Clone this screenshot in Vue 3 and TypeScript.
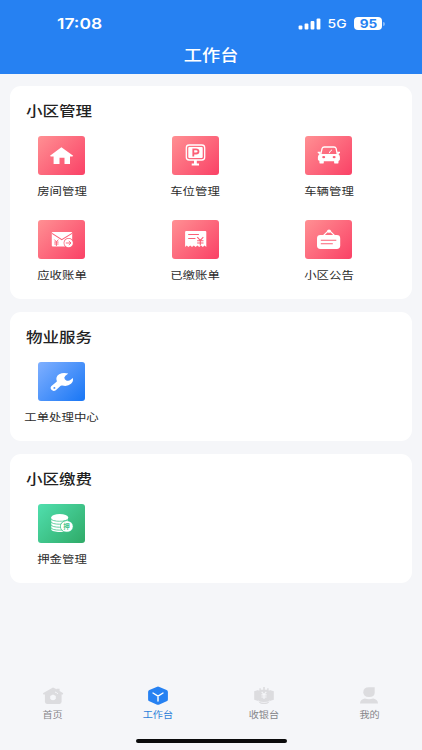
<script setup lang="ts">
type IconName = 'house' | 'parking' | 'car' | 'envelope' | 'bill' | 'notice' | 'wrench' | 'coins'
interface Entry { label: string; icon: IconName }
interface Section { title: string; tone: 'red' | 'blue' | 'green'; items: Entry[] }

const sections: Section[] = [
  {
    title: '小区管理',
    tone: 'red',
    items: [
      { label: '房间管理', icon: 'house' },
      { label: '车位管理', icon: 'parking' },
      { label: '车辆管理', icon: 'car' },
      { label: '应收账单', icon: 'envelope' },
      { label: '已缴账单', icon: 'bill' },
      { label: '小区公告', icon: 'notice' },
    ],
  },
  { title: '物业服务', tone: 'blue', items: [{ label: '工单处理中心', icon: 'wrench' }] },
  { title: '小区缴费', tone: 'green', items: [{ label: '押金管理', icon: 'coins' }] },
]

const tabs = [
  { label: '首页', icon: 'home', active: false },
  { label: '工作台', icon: 'work', active: true },
  { label: '收银台', icon: 'cash', active: false },
  { label: '我的', icon: 'me', active: false },
]
</script>

<template>
  <div class="screen">
    <header class="header">
      <div class="status">
        <span class="clock wide">17:08</span>
        <div class="status-right">
          <svg class="signal" width="23" height="12" viewBox="0 0 23 12" fill="#fff">
            <rect x="0.6" y="7.6" width="3.8" height="3.9" rx="1" />
            <rect x="6.6" y="5.4" width="3.8" height="6.1" rx="1" />
            <rect x="12.6" y="2.9" width="3.8" height="8.6" rx="1" />
            <rect x="18.6" y="0.4" width="3.8" height="11.1" rx="1" />
          </svg>
          <span class="network wide">5G</span>
          <div class="battery"><span class="wide">95</span></div>
          <i class="battery-tip"></i>
        </div>
      </div>
      <h1 class="page-title"><span class="wide">工作台</span></h1>
    </header>

    <main class="content">
      <section v-for="s in sections" :key="s.title" class="card">
        <h2 class="card-title"><span class="wide">{{ s.title }}</span></h2>
        <div class="grid">
          <div v-for="it in s.items" :key="it.label" class="entry">
            <div class="tile" :class="s.tone">
              <svg width="47" height="39" viewBox="0 0 47 39" fill="#fff">
                <path v-if="it.icon === 'house'" d="M23.4 11.2 35.2 19.8 34.4 20.6H32V28H26.5V21.8H21.5V28H15.6V20.6H12.8L12 19.8Z" />
                <template v-else-if="it.icon === 'parking'">
                  <rect x="14.3" y="9" width="18.4" height="15" rx="2.8" fill="none" stroke="#fff" stroke-width="1.3" />
                  <rect x="16.3" y="11" width="14.4" height="11" rx="1" />
                  <path d="M21.3 20.4V13.4H24Q26.5 13.4 26.5 15.4T24 17.5H21.3" class="ink" fill="none" stroke-width="1.8" />
                  <path d="M22 24h2.8v3.6H27v2h-7.3v-2H22Z" />
                </template>
                <template v-else-if="it.icon === 'car'">
                  <path d="M15.9 17.8 17.1 12.4Q17.6 11 19.2 11H29Q30.6 11 31.1 12.4L32.2 17.8" fill="none" stroke="#fff" stroke-width="1.3" />
                  <path d="M12.7 15.8h3V18h16.5v-2.2H35v1.3l-1.6.8q1.5 1.3 1.5 3.2v2.5q0 1-1.4 1.3v1.5q0 1.2-1.2 1.2h-2q-1.2 0-1.2-1.2v-1.2H18.8v1.2q0 1.2-1.2 1.2h-2q-1.2 0-1.2-1.2v-1.5q-1.5-.3-1.5-1.3v-2.5q0-1.9 1.6-3.2l-1.8-.8Z" />
                  <path d="m24.2 17.2 1.3-2.3 1.5-1" fill="none" stroke="#fff" stroke-width="1" />
                  <ellipse cx="18.7" cy="21.1" rx="1.5" ry="1.2" class="ink-fill" />
                  <ellipse cx="29.1" cy="21.1" rx="1.5" ry="1.2" class="ink-fill" />
                </template>
                <template v-else-if="it.icon === 'envelope'">
                  <rect x="13.8" y="12.1" width="20.4" height="14.5" rx="1" />
                  <path d="m14 13.4 9.8 6.2 10.2-6.2" fill="none" class="ink" stroke-width="1.1" />
                  <path d="m16.4 19.6 2 2.3 2-2.3M18.4 21.9V26M16.2 22.1h4.4M16.2 24h4.4" fill="none" class="ink" stroke-width=".9" />
                  <circle cx="30.6" cy="23" r="5" class="ink-fill" />
                  <circle cx="30.6" cy="23" r="4.3" />
                  <path d="M27.8 23h5M30.8 21l2.2 2-2.2 2" fill="none" class="ink" stroke-width=".9" />
                </template>
                <template v-else-if="it.icon === 'bill'">
                  <path d="M14.2 11H33.2q1.1 0 1.1 1V27l-1.7-1.4L30.8 27 29 25.6 27.2 27l-1.8-1.4L23.6 27l-1.8-1.4L20 27l-1.8-1.4L16.4 27l-1.7-1.4L13.1 27V12q0-1 1.1-1Z" />
                  <path d="M16.2 14.5h10.7M16.2 18.5h7.2M25.3 17.2l3 3.2 3-3.2M28.3 20.4v5M25.1 20.8h6.4M25.1 23h6.4" fill="none" class="ink" stroke-width="1.1" />
                </template>
                <template v-else-if="it.icon === 'notice'">
                  <path d="m18 16 5-5h2l5 5" fill="none" stroke="#fff" stroke-width="1.1" />
                  <ellipse cx="24" cy="11.2" rx="1.9" ry="1.6" />
                  <rect x="12" y="15" width="23.2" height="14" rx="3.4" />
                  <path d="M15.8 20.2h15.5M15.8 23.8h12" class="ink" stroke-width="1.05" />
                </template>
                <template v-else-if="it.icon === 'wrench'">
                  <path d="M30.3 11.6Q25.3 9.9 21.2 12.2 17.2 14.7 18.8 18.9 18.9 19.6 18.3 20.1L13.2 24.2Q11.7 25.9 13.4 27.8 15.4 29.8 17.8 28.2L22.7 23.8Q23.3 23.3 24.3 23.5 29.5 24.8 33 21.8 35.6 19.5 34.9 16L32.6 17.8Q30.7 19.3 28.3 18.4L26.8 17.3Q25.5 15.4 27.4 13.7Z" />
                  <ellipse cx="16.4" cy="25.9" rx="1" ry=".9" class="ink-fill" />
                </template>
                <template v-else>
                  <path d="M13.3 13.5v12c0 3.3 16.7 3.3 16.7 0v-12Z" />
                  <path d="M13 14.6c0 3.5 17 3.5 17 0M13 17.6c0 3.5 17 3.5 17 0M13 20.6c0 3.5 17 3.5 17 0M13 23.5c0 3.5 17 3.5 17 0" fill="none" class="ink" stroke-width=".8" />
                  <ellipse cx="21.7" cy="13.2" rx="8.4" ry="3.1" />
                  <ellipse cx="28.8" cy="22.4" rx="6.7" ry="6.1" class="ink-fill" />
                  <ellipse cx="28.8" cy="22.4" rx="6" ry="5.4" />
                  <text x="28.6" y="24.8" text-anchor="middle" class="coin-text ink-fill">押</text>
                </template>
              </svg>
            </div>
            <span class="entry-label wide">{{ it.label }}</span>
          </div>
        </div>
      </section>
    </main>

    <nav class="tabbar">
      <div v-for="t in tabs" :key="t.label" class="tab" :class="{ active: t.active }">
        <svg width="22" height="20" viewBox="0 0 22 20" fill="#dcdcdf">
          <template v-if="t.icon === 'home'">
            <path d="M11 1.4 14.6 3.3V2.7h3v2.2l3.3 2q.7.9-.2 1.7H19.6v7.2q0 2.1-2.1 2.1H5q-2.1 0-2.1-2.1V8.6H1.5Q.5 7.8 1.3 6.9Z" />
            <path d="M11 8.6 13.8 10v2.2q-.4 2-2.8 2t-2.8-2V10Z" fill="#f5f6f9" />
            <path d="M13 6q2 .7 3 1.8" fill="none" stroke="#f5f6f9" stroke-width="1" />
          </template>
          <template v-else-if="t.icon === 'work'">
            <path d="M9.6.9Q11 .2 12.4.9L19.6 4.1Q20.9 4.8 20.9 6V13.4Q20.9 14.7 19.6 15.3L12.4 18.5Q11 19.1 9.6 18.5L2.4 15.3Q1.1 14.7 1.1 13.4V6Q1.1 4.8 2.4 4.1Z" fill="#2681f2" />
            <path d="m6 7 5 3.1 5-3.1M11 10v5" fill="none" stroke="#fff" stroke-width="1.4" stroke-linecap="round" />
          </template>
          <template v-else-if="t.icon === 'cash'">
            <path d="M1.2 5.2 5.2 3.9V15L1.2 13.7ZM20.8 5.2 16.8 3.9V15L20.8 13.7Z" />
            <path d="M4.9 4.4h1.5V2.2h1.4v1.5h2.4V1h1.6v2.7h2.4V2.2h1.4v2.2h1.5v9.8q-2 1.9-6.1 1.9t-6.1-1.9Z" />
            <path d="m8.7 5.9 2.3 2.6 2.3-2.6M11 8.5v4.6M8.4 8.9h5.2M8.4 11h5.2" fill="none" stroke="#f5f6f9" stroke-width="1.1" />
            <path d="M5.3 15.2q5.7 3 11.4 0-1.3 2.9-5.7 2.9t-5.7-2.9Z" />
          </template>
          <template v-else>
            <path d="M11 1.2h5.7v5.2q0 4.5-5.7 4.5T5.3 6.2Q5.3 1.2 11 1.2Z" />
            <path d="M2 17.5q0-3.7 4.8-4.9 4.2 1.1 8.4 0 4.8 1.2 4.8 4.9Z" />
          </template>
        </svg>
        <span class="tab-label wide">{{ t.label }}</span>
      </div>
    </nav>
    <div class="indicator-row"><div class="indicator"></div></div>
  </div>
</template>

<style>
body {
  background: #f5f6f9;
}
</style>

<style scoped>
.screen {
  width: 422px;
  height: 750px;
  overflow: hidden;
  display: flex;
  flex-direction: column;
  background: #f5f6f9;
  font-family: Inter, "Noto Sans CJK SC", sans-serif;
}
.wide {
  display: inline-block;
  white-space: nowrap;
  transform: scaleX(1.18);
}
.header {
  height: 74px;
  flex: none;
  background: #2681f2;
  color: #fff;
}
.status {
  height: 38px;
  padding: 9px 37px 0 57px;
  box-sizing: border-box;
  display: flex;
  align-items: center;
  justify-content: space-between;
}
.clock {
  font-size: 14.8px;
  line-height: 20px;
  font-weight: 600;
  transform-origin: left center;
}
.status-right {
  display: flex;
  align-items: center;
}
.network {
  margin: 1px 9px 0 8px;
  font-size: 11.8px;
  line-height: 16px;
  font-weight: 500;
}
.battery {
  width: 28px;
  height: 13px;
  border-radius: 4px;
  background: #fff;
  color: #2681f2;
  font-size: 11.5px;
  line-height: 14px;
  font-weight: 700;
  text-align: center;
}
.battery-tip {
  width: 2px;
  height: 4px;
  margin-left: 1px;
  border-radius: 0 2px 2px 0;
  background: #83b7f8;
}
.page-title {
  margin: 0;
  padding-top: 6px;
  font-size: 15.4px;
  line-height: 23px;
  font-weight: 500;
  text-align: center;
}
.content {
  flex: 1;
  padding: 12px 10px 0;
  display: flex;
  flex-direction: column;
  gap: 13px;
}
.card {
  padding: 13px 0 12px 16px;
  border-radius: 11px;
  background: #fff;
}
.card-title {
  margin: 0;
  font-size: 14px;
  line-height: 23px;
  font-weight: 500;
  color: #222;
}
.card-title .wide {
  transform-origin: left center;
}
.grid {
  padding: 14px 0 0 12px;
  display: grid;
  grid-template-columns: repeat(3, 47px);
  column-gap: 86.5px;
  row-gap: 17px;
}
.entry {
  display: flex;
  flex-direction: column;
  align-items: center;
}
.tile {
  width: 47px;
  height: 39px;
  border-radius: 3px;
}
.tile svg {
  display: block;
}
.red {
  --ink: #fb6077;
  background: linear-gradient(135deg, #ff9093, #fa4166);
}
.blue {
  --ink: #4b91fa;
  background: linear-gradient(135deg, #80b0ff, #1876f5);
}
.green {
  --ink: #3fc58c;
  background: linear-gradient(135deg, #50dfae, #2faa67);
}
.ink {
  stroke: var(--ink);
}
.ink-fill {
  fill: var(--ink);
}
.coin-text {
  font-size: 6.5px;
  font-weight: 700;
}
.entry-label {
  margin-top: 8px;
  font-size: 10.5px;
  line-height: 17px;
  height: 20px;
  color: #2c2c2c;
}
.tabbar {
  flex: none;
  height: 52px;
  display: grid;
  grid-template-columns: repeat(4, 1fr);
}
.tab {
  display: flex;
  flex-direction: column;
  align-items: center;
  color: #858589;
}
.tab svg {
  display: block;
}
.tab-label {
  margin-top: 2px;
  font-size: 8.6px;
  line-height: 14px;
}
.active {
  color: #2e7fd8;
}
.indicator-row {
  flex: none;
  height: 12px;
  display: flex;
  justify-content: center;
  padding-top: 1px;
  box-sizing: border-box;
}
.indicator {
  width: 151px;
  height: 4px;
  border-radius: 2px;
  background: #0b0b0c;
}
</style>
